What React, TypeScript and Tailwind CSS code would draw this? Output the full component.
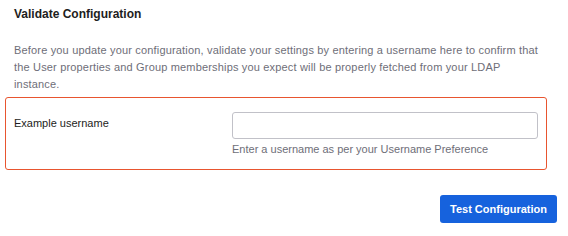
export default function App() {
  return (
    <div className="w-[568px] h-[236px] bg-white font-['Liberation_Sans',Arial,sans-serif]">
      <div className="pl-[14px] pt-[6px]">
        <h2 className="text-[12px] leading-[16px] font-bold text-[#1d1d21]">Validate Configuration</h2>
      </div>
      <p className="mt-[20px] pl-[14px] pr-[10px] text-[11px] leading-[17px] text-[#6e6e78] tracking-[0.17px] whitespace-nowrap">
        Before you update your configuration, validate your settings by entering a username here to confirm that
        <br />
        the User properties and Group memberships you expect will be properly fetched from your LDAP
        <br />
        instance.
      </p>
      <div className="ml-[5px] mt-[4px] w-[542px] h-[73px] border border-[#e8552f] rounded-[3px] flex pl-[8px] pt-[14px]">
        <div className="w-[218px] text-[11px] leading-[14px] text-[#1d1d21] pt-[4px]">Example username</div>
        <div className="flex flex-col">
          <input className="w-[306px] h-[27px] border border-[#c1c1c8] rounded-[3px] outline-none px-2 text-[11px]" />
          <div className="mt-[3px] text-[11px] leading-[14px] text-[#6e6e78]">Enter a username as per your Username Preference</div>
        </div>
      </div>
      <div className="flex justify-end pr-[11px] mt-[25px]">
        <button className="w-[117px] h-[28px] bg-[#1662dd] rounded-[3px] text-white text-[11px] font-bold">Test Configuration</button>
      </div>
    </div>
  );
}
